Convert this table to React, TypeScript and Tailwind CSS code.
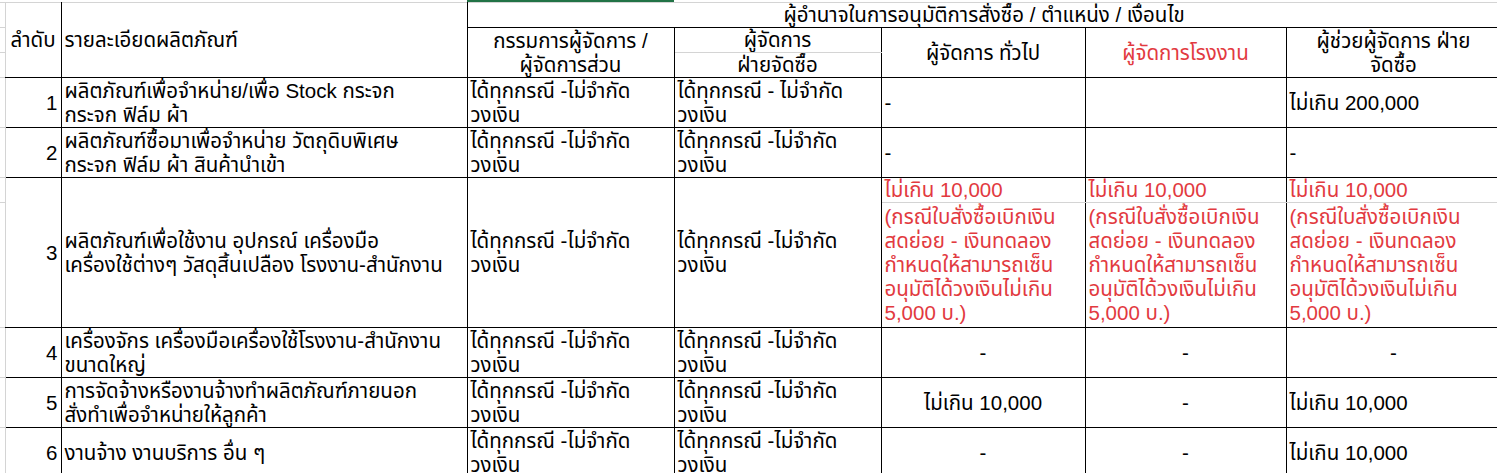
const font = 'font-["Liberation_Sans","Noto_Sans_Thai",sans-serif]'

const cell = 'border border-black px-[3px] leading-[24px] align-middle whitespace-nowrap overflow-hidden'
const gutter = 'border-r border-b border-r-[#d4d4d4] border-b-[#d4d4d4] p-0'
const red = 'text-[#e23a3f]'

function Lines({ lines }: { lines: string[] }) {
  return (
    <>
      {lines.map((l, i) => (
        <div key={i}>{l}</div>
      ))}
    </>
  )
}

const noLimit = ['ได้ทุกกรณี -ไม่จำกัด', 'วงเงิน']

const redNote = [
  '(กรณีใบสั่งซื้อเบิกเงิน',
  'สดย่อย - เงินทดลอง',
  'กำหนดให้สามารถเซ็น',
  'อนุมัติได้วงเงินไม่เกิน',
  '5,000 บ.)',
]

type Row = {
  no: number
  desc: string[]
  md: string[]
  buy: string[]
  gm: string
  gmCenter?: boolean
  factory: string
  asst: string
  asstCenter?: boolean
}

const rows: Row[] = [
  {
    no: 1,
    desc: ['ผลิตภัณฑ์เพื่อจำหน่าย/เพื่อ Stock กระจก', 'กระจก ฟิล์ม ผ้า'],
    md: noLimit,
    buy: ['ได้ทุกกรณี - ไม่จำกัด', 'วงเงิน'],
    gm: '-',
    factory: '',
    asst: 'ไม่เกิน 200,000',
  },
  {
    no: 2,
    desc: ['ผลิตภัณฑ์ซื้อมาเพื่อจำหน่าย วัตถุดิบพิเศษ', 'กระจก ฟิล์ม ผ้า สินค้านำเข้า'],
    md: noLimit,
    buy: noLimit,
    gm: '-',
    factory: '',
    asst: '-',
  },
]

const lowerRows: Row[] = [
  {
    no: 4,
    desc: ['เครื่องจักร เครื่องมือเครื่องใช้โรงงาน-สำนักงาน', 'ขนาดใหญ่'],
    md: noLimit,
    buy: noLimit,
    gm: '-',
    gmCenter: true,
    factory: '-',
    asst: '-',
    asstCenter: true,
  },
  {
    no: 5,
    desc: ['การจัดจ้างหรืองานจ้างทำผลิตภัณฑ์ภายนอก', 'สั่งทำเพื่อจำหน่ายให้ลูกค้า'],
    md: noLimit,
    buy: noLimit,
    gm: 'ไม่เกิน 10,000',
    gmCenter: true,
    factory: '-',
    asst: 'ไม่เกิน 10,000',
  },
  {
    no: 6,
    desc: ['งานจ้าง งานบริการ อื่น ๆ'],
    md: noLimit,
    buy: noLimit,
    gm: '-',
    gmCenter: true,
    factory: '-',
    asst: 'ไม่เกิน 10,000',
  },
]

function BodyRow({ row }: { row: Row }) {
  return (
    <tr className="h-[50px]">
      <td className={gutter}></td>
      <td className={`${cell} text-right border-l-0`}>{row.no}</td>
      <td className={cell}>
        <Lines lines={row.desc} />
      </td>
      <td className={cell}>
        <Lines lines={row.md} />
      </td>
      <td className={cell}>
        <Lines lines={row.buy} />
      </td>
      <td className={`${cell} ${row.gmCenter ? 'text-center' : ''}`}>{row.gm}</td>
      <td className={`${cell} text-center`}>{row.factory}</td>
      <td className={`${cell} ${row.asstCenter ? 'text-center' : ''}`}>{row.asst}</td>
    </tr>
  )
}

export default function App() {
  return (
    <div className={`h-[473px] w-full overflow-hidden bg-white text-[20.5px] text-black ${font}`}>
      <div className="flex h-[2px]">
        <div className="w-[467px]"></div>
        <div className="w-[207px] bg-[#217346]"></div>
      </div>
      <table className="table-fixed border-collapse w-[1501px] border-t border-t-[#d4d4d4]">
        <colgroup>
          <col className="w-[5px]" />
          <col className="w-[56px]" />
          <col className="w-[406px]" />
          <col className="w-[207px]" />
          <col className="w-[207px]" />
          <col className="w-[204px]" />
          <col className="w-[201px]" />
          <col className="w-[215px]" />
        </colgroup>
        <tbody>
          <tr className="h-[25px]">
            <td className={gutter}></td>
            <td rowSpan={3} className={`${cell} border-t-0 border-l-0 text-center`}>ลำดับ</td>
            <td rowSpan={3} className={`${cell} border-t-0`}>รายละเอียดผลิตภัณฑ์</td>
            <td colSpan={5} className={`${cell} border-t-0 text-center`}>
              ผู้อำนาจในการอนุมัติการสั่งซื้อ / ตำแหน่ง / เงื่อนไข
            </td>
          </tr>
          <tr className="h-[25px]">
            <td className={gutter}></td>
            <td rowSpan={2} className={`${cell} text-center`}>
              <Lines lines={['กรรมการผู้จัดการ /', 'ผู้จัดการส่วน']} />
            </td>
            <td className={`${cell} text-center border-b-[#d4d4d4]`}>ผู้จัดการ</td>
            <td rowSpan={2} className={`${cell} text-center`}>ผู้จัดการ ทั่วไป</td>
            <td rowSpan={2} className={`${cell} text-center ${red}`}>ผู้จัดการโรงงาน</td>
            <td rowSpan={2} className={`${cell} text-center`}>
              <Lines lines={['ผู้ช่วยผู้จัดการ ฝ่าย', 'จัดซื้อ']} />
            </td>
          </tr>
          <tr className="h-[25px]">
            <td className={gutter}></td>
            <td className={`${cell} text-center border-t-[#d4d4d4]`}>ฝ่ายจัดซื้อ</td>
          </tr>

          {rows.map((r) => (
            <BodyRow key={r.no} row={r} />
          ))}

          <tr className="h-[25px]">
            <td className={gutter}></td>
            <td rowSpan={2} className={`${cell} text-right border-l-0`}>3</td>
            <td rowSpan={2} className={cell}>
              <Lines lines={['ผลิตภัณฑ์เพื่อใช้งาน อุปกรณ์ เครื่องมือ', 'เครื่องใช้ต่างๆ วัสดุสิ้นเปลือง โรงงาน-สำนักงาน']} />
            </td>
            <td rowSpan={2} className={cell}>
              <Lines lines={noLimit} />
            </td>
            <td rowSpan={2} className={cell}>
              <Lines lines={noLimit} />
            </td>
            {[0, 1, 2].map((i) => (
              <td key={i} className={`${cell} ${red} border-b-[#d4d4d4]`}>ไม่เกิน 10,000</td>
            ))}
          </tr>
          <tr className="h-[125px]">
            <td className={gutter}></td>
            {[0, 1, 2].map((i) => (
              <td key={i} className={`${cell} ${red} border-t-[#d4d4d4]`}>
                <Lines lines={redNote} />
              </td>
            ))}
          </tr>

          {lowerRows.map((r) => (
            <BodyRow key={r.no} row={r} />
          ))}
        </tbody>
      </table>
    </div>
  )
}
